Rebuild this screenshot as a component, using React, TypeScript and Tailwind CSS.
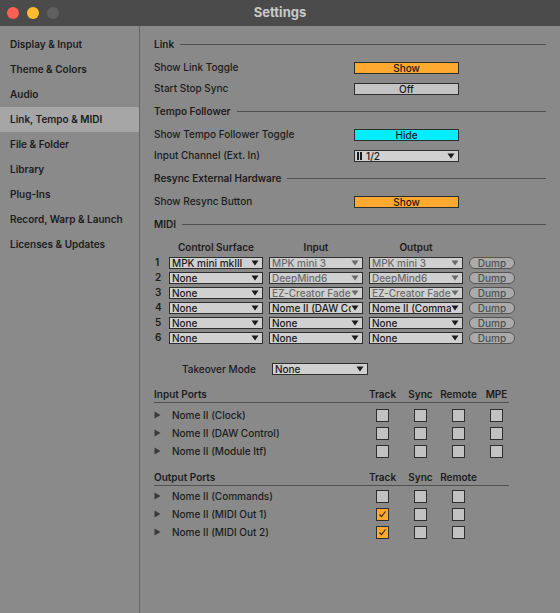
import React from 'react';

const font = { fontFamily: 'Inter, "Noto Sans", "Liberation Sans", sans-serif' };

const sidebarItems = [
  'Display & Input',
  'Theme & Colors',
  'Audio',
  'Link, Tempo & MIDI',
  'File & Folder',
  'Library',
  'Plug-Ins',
  'Record, Warp & Launch',
  'Licenses & Updates',
];

function SectionHeader({ title }: { title: string }) {
  return (
    <div className="pt-[4px] pb-[5px]">
      <div className="flex h-4 items-center">
        <span className="text-[10px] font-semibold text-[#1c1c1c]">{title}</span>
        <div className="ml-[6px] h-px flex-1 bg-[#505050]" />
      </div>
    </div>
  );
}

function ToggleRow({ label, value, color }: { label: string; value: string; color: string }) {
  return (
    <div className="flex h-[21px] items-center">
      <span className="w-[200px] text-[10px] font-medium text-[#1c1c1c]">{label}</span>
      <div
        className={`flex h-[12px] w-[105px] items-center justify-center border border-[#2e2e2e] text-[10px] font-medium leading-none text-[#1a1a1a] ${color}`}
      >
        {value}
      </div>
    </div>
  );
}

function Arrow({ dim }: { dim?: boolean }) {
  return (
    <svg width="8" height="6" viewBox="0 0 8 6" className="mr-[3px] shrink-0">
      <path d="M0.5 0.5 L7.5 0.5 L4 5.5 Z" fill={dim ? '#6a6a6a' : '#1a1a1a'} />
    </svg>
  );
}

function Dropdown({ text, dim, width }: { text: string; dim?: boolean; width: string }) {
  return (
    <div className={`flex h-[12px] ${width} items-center border border-[#2e2e2e] bg-[#d0d0d0]`}>
      <span
        className={`flex-1 overflow-hidden whitespace-nowrap pl-[2px] text-[10px] font-medium leading-[10px] ${
          dim ? 'text-[#6a6a6a]' : 'text-[#1a1a1a]'
        }`}
      >
        {text}
      </span>
      <Arrow dim={dim} />
    </div>
  );
}

const midiRows = [
  { cs: 'MPK mini mkIII', inp: 'MPK mini 3', out: 'MPK mini 3', dim: true },
  { cs: 'None', inp: 'DeepMind6', out: 'DeepMind6', dim: true },
  { cs: 'None', inp: 'EZ-Creator Fader', out: 'EZ-Creator Fader', dim: true },
  { cs: 'None', inp: 'Nome II (DAW Control)', out: 'Nome II (Commands)', dim: false },
  { cs: 'None', inp: 'None', out: 'None', dim: false },
  { cs: 'None', inp: 'None', out: 'None', dim: false },
];

function Checkbox({ checked }: { checked?: boolean }) {
  return (
    <div
      className={`flex h-[13px] w-[13px] items-center justify-center border border-[#2e2e2e] ${
        checked ? 'bg-[#ffa930]' : 'bg-[#c2c2c2]'
      }`}
    >
      {checked && (
        <svg width="9" height="8" viewBox="0 0 9 8">
          <path d="M1.5 4.5 L3.5 6.5 L7.5 1.5" stroke="#2a2a2a" strokeWidth="1.2" fill="none" />
        </svg>
      )}
    </div>
  );
}

function PortsHeader({ title, cols }: { title: string; cols: string[] }) {
  return (
    <div className="flex h-4 w-[355px] items-center border-b border-[#505050] pb-[1px]">
      <span className="w-[222px] text-[10px] font-semibold text-[#1c1c1c]">{title}</span>
      <div className="flex gap-[25px]">
        {cols.map((c) => (
          <div key={c} className="flex w-[13px] justify-center whitespace-nowrap text-[10px] font-semibold text-[#1c1c1c]">
            {c}
          </div>
        ))}
      </div>
    </div>
  );
}

function PortRow({ name, checks }: { name: string; checks: boolean[] }) {
  return (
    <div className="flex h-[18px] items-center">
      <div className="flex w-[222px] items-center">
        <svg width="7" height="8" viewBox="0 0 7 8">
          <path d="M0.5 0.5 L6.5 4 L0.5 7.5 Z" fill="#3a3a3a" />
        </svg>
        <span className="ml-[11px] text-[10px] font-medium text-[#1c1c1c]">{name}</span>
      </div>
      <div className="flex gap-[25px]">
        {checks.map((c, i) => (
          <Checkbox key={i} checked={c} />
        ))}
      </div>
    </div>
  );
}

export default function App() {
  return (
    <div className="flex h-[613px] w-[560px] flex-col overflow-hidden bg-[#898989]" style={font}>
      {/* title bar */}
      <div className="relative flex h-[26px] shrink-0 items-center bg-[#4b4b4b]">
        <div className="flex gap-[8px] pl-[7px]">
          <div className="h-[12px] w-[12px] rounded-full bg-[#fe5f57]" />
          <div className="h-[12px] w-[12px] rounded-full bg-[#febc2e]" />
          <div className="h-[12px] w-[12px] rounded-full bg-[#5f5f5f]" />
        </div>
        <div className="absolute inset-0 flex items-center justify-center text-[13px] font-bold text-[#c9c9c9]">
          Settings
        </div>
      </div>

      <div className="flex flex-1">
        {/* sidebar */}
        <div className="w-[140px] shrink-0 border-r border-[#666666] bg-[#8a8a8a] pt-[6px]">
          {sidebarItems.map((item) => (
            <div
              key={item}
              className={`flex h-[25px] items-center pl-[10px] text-[10px] font-semibold text-[#1c1c1c] ${
                item === 'Link, Tempo & MIDI' ? 'bg-[#a6a6a6]' : ''
              }`}
            >
              {item}
            </div>
          ))}
        </div>

        {/* main */}
        <div className="flex flex-1 flex-col pl-[14px] pr-[14px] pt-[6px]">
          <SectionHeader title="Link" />
          <ToggleRow label="Show Link Toggle" value="Show" color="bg-[#ffa930]" />
          <ToggleRow label="Start Stop Sync" value="Off" color="bg-[#c4c4c4]" />
          <SectionHeader title="Tempo Follower" />
          <ToggleRow label="Show Tempo Follower Toggle" value="Hide" color="bg-[#00eeff]" />
          <div className="flex h-[21px] items-center">
            <span className="w-[200px] text-[10px] font-medium text-[#1c1c1c]">Input Channel (Ext. In)</span>
            <div className="flex h-[12px] w-[105px] items-center border border-[#2e2e2e] bg-[#d0d0d0]">
              <div className="ml-[2px] flex gap-[1px]">
                <div className="h-[8px] w-[2px] bg-[#1a1a1a]" />
                <div className="h-[8px] w-[2px] bg-[#1a1a1a]" />
              </div>
              <span className="ml-[4px] flex-1 text-[10px] font-medium leading-none text-[#1a1a1a]">1/2</span>
              <Arrow />
            </div>
          </div>
          <SectionHeader title="Resync External Hardware" />
          <ToggleRow label="Show Resync Button" value="Show" color="bg-[#ffa930]" />
          <SectionHeader title="MIDI" />

          {/* MIDI table */}
          <div className="mt-[2px] flex h-4 items-center">
            <div className="w-[15px]" />
            <div className="w-[94px] text-center text-[10px] font-semibold text-[#1c1c1c]">Control Surface</div>
            <div className="ml-[6px] w-[94px] text-center text-[10px] font-semibold text-[#1c1c1c]">Input</div>
            <div className="ml-[6px] w-[94px] text-center text-[10px] font-semibold text-[#1c1c1c]">Output</div>
          </div>
          {midiRows.map((r, i) => (
            <div key={i} className="flex h-[15px] items-center">
              <div className="w-[15px] pl-[1px] text-[10px] font-semibold text-[#1c1c1c]">{i + 1}</div>
              <Dropdown text={r.cs} width="w-[94px]" />
              <div className="ml-[6px]">
                <Dropdown text={r.inp} dim={r.dim} width="w-[94px]" />
              </div>
              <div className="ml-[6px]">
                <Dropdown text={r.out} dim={r.dim} width="w-[94px]" />
              </div>
              <div className="ml-[6px] flex h-[12px] w-[46px] items-center justify-center rounded-full border border-[#555555] bg-[#ababab] text-[10px] font-medium leading-none text-[#505050]">
                Dump
              </div>
            </div>
          ))}

          <div className="mt-[16px] flex h-4 items-center">
            <span className="w-[118px] pl-[28px] text-[10px] font-medium text-[#1c1c1c]">Takeover Mode</span>
            <Dropdown text="None" width="w-[96px]" />
          </div>

          <div className="mt-[10px]">
            <PortsHeader title="Input Ports" cols={['Track', 'Sync', 'Remote', 'MPE']} />
          </div>
          <div className="mt-[3px]">
            <PortRow name="Nome II (Clock)" checks={[false, false, false, false]} />
            <PortRow name="Nome II (DAW Control)" checks={[false, false, false, false]} />
            <PortRow name="Nome II (Module Itf)" checks={[false, false, false, false]} />
          </div>

          <div className="mt-[10px]">
            <PortsHeader title="Output Ports" cols={['Track', 'Sync', 'Remote']} />
          </div>
          <div className="mt-[1px]">
            <PortRow name="Nome II (Commands)" checks={[false, false, false]} />
            <PortRow name="Nome II (MIDI Out 1)" checks={[true, false, false]} />
            <PortRow name="Nome II (MIDI Out 2)" checks={[true, false, false]} />
          </div>
        </div>
      </div>
    </div>
  );
}
